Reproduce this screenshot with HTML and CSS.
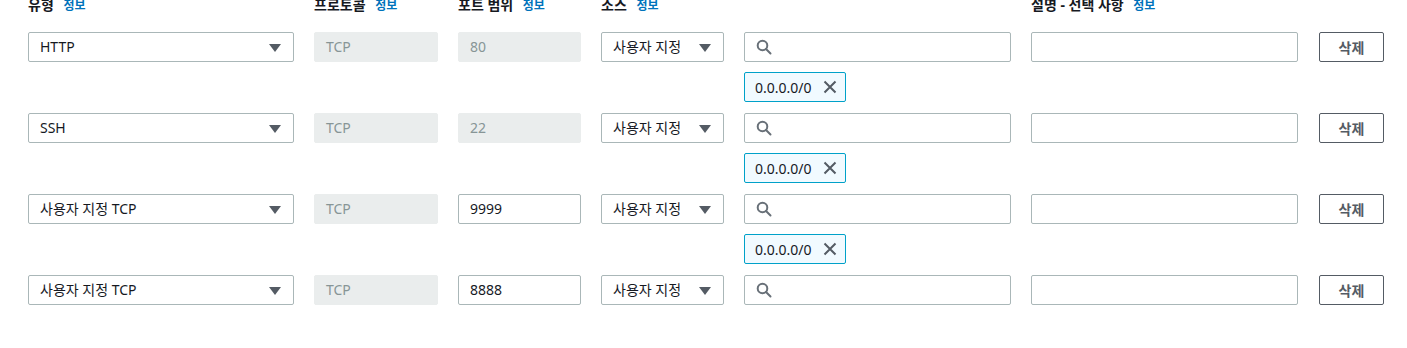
FILE: index.html
```html
<!DOCTYPE html>
<html lang="ko">
<head>
  <meta charset="UTF-8">
  <title>인바운드 규칙</title>
  <link rel="stylesheet" href="styles.css">
</head>
<body>

  <div class="rules">
    <div class="grid head">
      <div class="label">유형 <a class="info">정보</a></div>
      <div class="label">프로토콜 <a class="info">정보</a></div>
      <div class="label">포트 범위 <a class="info">정보</a></div>
      <div class="label">소스 <a class="info">정보</a></div>
      <div></div>
      <div class="label">설명 - 선택 사항 <a class="info">정보</a></div>
      <div></div>
    </div>

    <div class="grid rule">
      <div class="field select">HTTP<span class="caret"></span></div>
      <div class="field disabled">TCP</div>
      <div class="field disabled">80</div>
      <div class="field select">사용자 지정<span class="caret"></span></div>
      <div class="field search"><svg viewBox="0 0 16 16" width="16" height="16"><circle cx="6.5" cy="6.5" r="4.8" fill="none" stroke="#687078" stroke-width="2"/><path d="M10 10l4.5 4.5" stroke="#687078" stroke-width="2" stroke-linecap="round"/></svg></div>
      <div class="field"></div>
      <button class="delete">삭제</button>
      <div class="chip">0.0.0.0/0<svg viewBox="0 0 16 16" width="16" height="16"><path d="M2.5 2.5l11 11M13.5 2.5l-11 11" stroke="#545b64" stroke-width="2"/></svg></div>
    </div>

    <div class="grid rule">
      <div class="field select">SSH<span class="caret"></span></div>
      <div class="field disabled">TCP</div>
      <div class="field disabled">22</div>
      <div class="field select">사용자 지정<span class="caret"></span></div>
      <div class="field search"><svg viewBox="0 0 16 16" width="16" height="16"><circle cx="6.5" cy="6.5" r="4.8" fill="none" stroke="#687078" stroke-width="2"/><path d="M10 10l4.5 4.5" stroke="#687078" stroke-width="2" stroke-linecap="round"/></svg></div>
      <div class="field"></div>
      <button class="delete">삭제</button>
      <div class="chip">0.0.0.0/0<svg viewBox="0 0 16 16" width="16" height="16"><path d="M2.5 2.5l11 11M13.5 2.5l-11 11" stroke="#545b64" stroke-width="2"/></svg></div>
    </div>

    <div class="grid rule">
      <div class="field select">사용자 지정 TCP<span class="caret"></span></div>
      <div class="field disabled">TCP</div>
      <div class="field">9999</div>
      <div class="field select">사용자 지정<span class="caret"></span></div>
      <div class="field search"><svg viewBox="0 0 16 16" width="16" height="16"><circle cx="6.5" cy="6.5" r="4.8" fill="none" stroke="#687078" stroke-width="2"/><path d="M10 10l4.5 4.5" stroke="#687078" stroke-width="2" stroke-linecap="round"/></svg></div>
      <div class="field"></div>
      <button class="delete">삭제</button>
      <div class="chip">0.0.0.0/0<svg viewBox="0 0 16 16" width="16" height="16"><path d="M2.5 2.5l11 11M13.5 2.5l-11 11" stroke="#545b64" stroke-width="2"/></svg></div>
    </div>

    <div class="grid rule">
      <div class="field select">사용자 지정 TCP<span class="caret"></span></div>
      <div class="field disabled">TCP</div>
      <div class="field">8888</div>
      <div class="field select">사용자 지정<span class="caret"></span></div>
      <div class="field search"><svg viewBox="0 0 16 16" width="16" height="16"><circle cx="6.5" cy="6.5" r="4.8" fill="none" stroke="#687078" stroke-width="2"/><path d="M10 10l4.5 4.5" stroke="#687078" stroke-width="2" stroke-linecap="round"/></svg></div>
      <div class="field"></div>
      <button class="delete">삭제</button>
    </div>
  </div>

</body>
</html>
```

FILE: styles.css
```css
body {
  margin: 0;
  font-family: "Noto Sans", "Noto Sans CJK KR", sans-serif;
  font-size: 14px;
  color: #16191f;
  background: #fff;
}
.rules {
  padding-left: 28px;
  margin-top: -6px;
}
.grid {
  display: grid;
  grid-template-columns: 266px 124px 123px 123px 267px 267px 66px;
  column-gap: 20px;
}
.head {
  height: 38px;
}
.label {
  font-weight: bold;
  line-height: 22px;
  white-space: nowrap;
}
.info {
  color: #0073bb;
  font-size: 12px;
  margin-left: 6px;
}
.rule {
  row-gap: 10px;
  margin-bottom: 11px;
}
.field {
  box-sizing: border-box;
  height: 30px;
  border: 1px solid #aab7b8;
  border-radius: 2px;
  padding: 0 11px;
  display: flex;
  align-items: center;
  position: relative;
  line-height: 20px;
}
.disabled {
  background: #eaeded;
  border-color: #eaeded;
  color: #879596;
}
.caret {
  position: absolute;
  right: 12px;
  top: 11px;
  width: 0;
  height: 0;
  border-left: 6px solid transparent;
  border-right: 6px solid transparent;
  border-top: 8px solid #545b64;
}
.search svg {
  display: block;
}
.delete {
  box-sizing: border-box;
  height: 30px;
  border: 1px solid #545b64;
  border-radius: 2px;
  background: #fff;
  color: #545b64;
  font-family: inherit;
  font-size: 14px;
  font-weight: bold;
  margin-left: 1px;
  width: 65px;
}
.chip {
  grid-column: 5;
  justify-self: start;
  box-sizing: border-box;
  height: 30px;
  border: 1px solid #00a1c9;
  border-radius: 2px;
  background: #f1faff;
  display: flex;
  align-items: center;
  gap: 10px;
  padding: 0 7px 0 10px;
}
.chip svg {
  display: block;
}
```
